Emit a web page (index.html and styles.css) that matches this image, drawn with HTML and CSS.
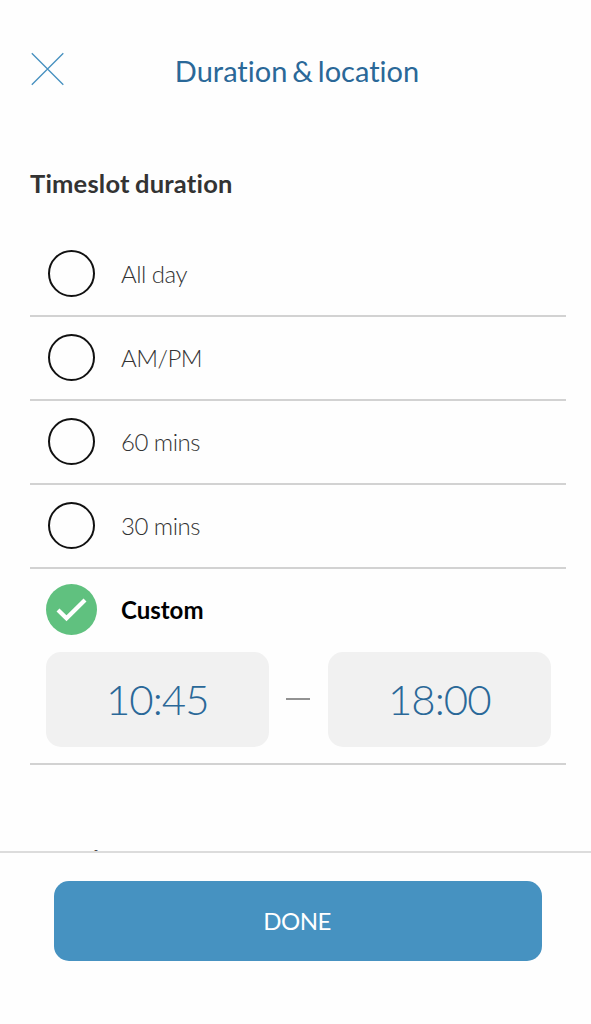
FILE: index.html
```
<!DOCTYPE html>
<html lang="en">
<head>
    <meta charset="UTF-8">
    <meta name="viewport" content="width=device-width, initial-scale=1.0">
    <title>Duration &amp; location</title>
    <link rel="stylesheet" href="styles.css">
</head>
<body>
    <div class="screen">
        <header class="header">
            <svg class="close-icon" xmlns="http://www.w3.org/2000/svg" viewBox="0 0 34 34">
                <path d="M1.8 1.3L33.3 32.8M33.3 1.3L1.8 32.8"/>
            </svg>
            <h1>Duration &amp; location</h1>
        </header>

        <main class="content">
            <h2>Timeslot duration</h2>
            <ul class="options">
                <li class="option"><span class="radio"></span><span class="label">All day</span></li>
                <li class="option"><span class="radio"></span><span class="label">AM/PM</span></li>
                <li class="option"><span class="radio"></span><span class="label">60 mins</span></li>
                <li class="option"><span class="radio"></span><span class="label">30 mins</span></li>
                <li class="option selected">
                    <svg class="check-icon" xmlns="http://www.w3.org/2000/svg" viewBox="0 0 51 51">
                        <circle cx="25.5" cy="25.5" r="25.5"/>
                        <path d="M12 26L20.5 34.3L39 16"/>
                    </svg>
                    <span class="label">Custom</span>
                </li>
            </ul>
            <div class="time-range">
                <div class="time">10:45</div>
                <span class="dash"></span>
                <div class="time">18:00</div>
            </div>
            <h2 class="next-title">Location</h2>
        </main>

        <footer class="footer">
            <button class="done">DONE</button>
        </footer>
    </div>
</body>
</html>
```
FILE: styles.css
```
* {
    box-sizing: border-box;
}
body {
    margin: 0;
    font-family: Lato, sans-serif;
    font-variant-ligatures: none;
    background: #fefefe;
    color: #333;
}
.screen {
    display: flex;
    flex-direction: column;
    height: 100vh;
    overflow: hidden;
}
.header {
    display: grid;
    grid-template-columns: 34px 1fr 34px;
    align-items: center;
    height: 138px;
    padding: 0 27px 0 30px;
}
.close-icon {
    width: 34px;
    height: 34px;
    fill: none;
    stroke: #4690c0;
    stroke-width: 1.3;
}
h1 {
    margin: 4px 0 0;
    font-size: 29px;
    line-height: 36px;
    font-weight: 400;
    word-spacing: -2.5px;
    text-align: center;
    color: #2a6898;
}
.content {
    flex: 1;
    min-height: 0;
    overflow: hidden;
    padding: 29px 25px 0 30px;
}
h2 {
    margin: 0;
    font-size: 25.5px;
    line-height: 32px;
    font-weight: 700;
    letter-spacing: 0.2px;
    word-spacing: -1px;
}
.options {
    list-style: none;
    margin: 34px 0 0;
    padding: 0;
}
.option {
    display: flex;
    align-items: center;
    height: 84px;
    padding: 0 16px 2px;
    border-bottom: 2px solid #d2d2d2;
}
.radio {
    width: 47px;
    height: 47px;
    margin: 0 2px;
    border: 2px solid #111;
    border-radius: 50%;
}
.label {
    margin: 1px 0 0 24px;
    font-size: 24px;
    line-height: 30px;
    font-weight: 300;
    letter-spacing: -0.5px;
}
.selected {
    height: 83px;
    border-bottom: none;
}
.selected .label {
    font-weight: 700;
    letter-spacing: 0;
    color: #000;
}
.check-icon {
    width: 51px;
    height: 51px;
}
.check-icon circle {
    fill: #60c17f;
}
.check-icon path {
    fill: none;
    stroke: #fff;
    stroke-width: 4.2;
}
.time-range {
    display: flex;
    align-items: center;
    justify-content: space-between;
    padding: 0 15.5px 16px 16px;
    border-bottom: 2px solid #d2d2d2;
}
.time {
    width: 222.5px;
    height: 95px;
    border-radius: 15px;
    background: #f1f1f1;
    color: #2a6898;
    font-size: 42px;
    line-height: 95px;
    font-weight: 300;
    letter-spacing: -1px;
    text-align: center;
}
.dash {
    width: 24px;
    height: 2px;
    margin-bottom: 1px;
    background: #929292;
}
.next-title {
    margin-top: 78px;
}
.footer {
    height: 173px;
    padding: 28px 49px 0 54px;
    border-top: 2px solid #dcdcdc;
}
.done {
    display: block;
    width: 100%;
    height: 79.5px;
    padding: 0 2px 1px 0;
    border: none;
    border-radius: 15px;
    background: #4692c1;
    color: #fff;
    font-family: inherit;
    font-size: 24px;
    letter-spacing: -0.5px;
}
```
